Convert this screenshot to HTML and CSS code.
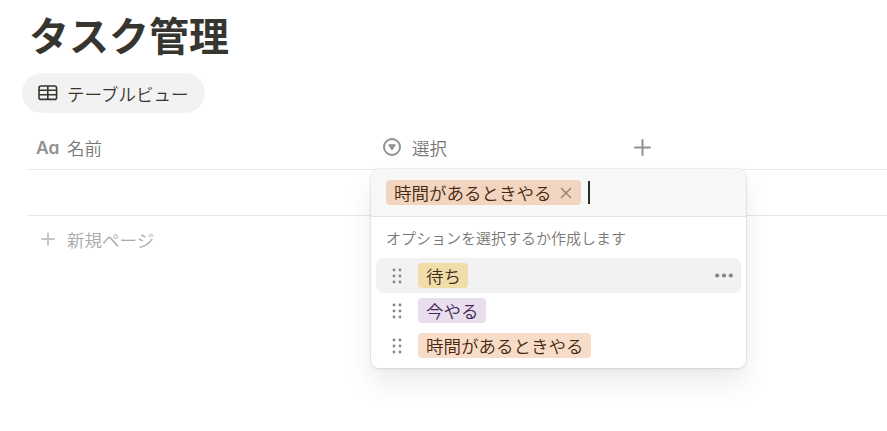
FILE: index.html
```html
<!DOCTYPE html>
<html lang="ja">
<head>
    <meta charset="UTF-8">
    <meta name="viewport" content="width=device-width, initial-scale=1.0">
    <title>タスク管理</title>
    <link rel="stylesheet" href="styles.css">
</head>
<body>

    <h1>タスク管理</h1>

    <button class="view-tab" type="button">
        <svg width="20" height="16" viewBox="0 0 20 16" fill="none" stroke="#37352f" stroke-width="1.6">
            <rect x="1" y="1" width="17.6" height="13.4" rx="2" />
            <path d="M1 5.2h17.6M1 9.8h17.6M9.8 1v13.4" />
        </svg>
        <span>テーブルビュー</span>
    </button>

    <div class="table">
        <div class="table-head">
            <div class="col-name">
                <span class="icon-title">Aa</span>
                <span>名前</span>
            </div>
            <div class="col-select">
                <svg width="18" height="18" viewBox="0 0 18 18">
                    <circle cx="9" cy="9" r="8" fill="none" stroke="#91918e" stroke-width="2" />
                    <path d="M5.7 6.2h6.6q.8 0 .4.7l-3.2 5.2q-.5.7-1 0l-3.2-5.2q-.4-.7.4-.7z" fill="#91918e" />
                </svg>
                <span>選択</span>
            </div>
            <div class="col-add">
                <svg width="17" height="17" viewBox="0 0 17 17" stroke="#91918e" stroke-width="2" stroke-linecap="round">
                    <path d="M8.5 1v15M1 8.5h15" />
                </svg>
            </div>
        </div>

        <div class="table-row">
            <div class="popup">
                <div class="popup-input">
                    <span class="tag tag-selected">時間があるときやる
                        <svg width="12" height="12" viewBox="0 0 12 12" stroke="#968777" stroke-width="1.5">
                            <path d="M1 1l10 10M11 1L1 11" />
                        </svg>
                    </span>
                    <span class="caret"></span>
                </div>
                <p class="hint">オプションを選択するか作成します</p>
                <ul class="options">
                    <li class="option active">
                        <svg class="handle" width="10" height="16" viewBox="0 0 10 16" fill="#868683">
                            <circle cx="2" cy="2" r="1.4" /><circle cx="8" cy="2" r="1.4" />
                            <circle cx="2" cy="8" r="1.4" /><circle cx="8" cy="8" r="1.4" />
                            <circle cx="2" cy="14" r="1.4" /><circle cx="8" cy="14" r="1.4" />
                        </svg>
                        <span class="tag yellow">待ち</span>
                        <svg class="more" width="18" height="5" viewBox="0 0 18 5" fill="#868683">
                            <circle cx="2.2" cy="2.5" r="2.1" /><circle cx="9" cy="2.5" r="2.1" /><circle cx="15.8" cy="2.5" r="2.1" />
                        </svg>
                    </li>
                    <li class="option">
                        <svg class="handle" width="10" height="16" viewBox="0 0 10 16" fill="#868683">
                            <circle cx="2" cy="2" r="1.4" /><circle cx="8" cy="2" r="1.4" />
                            <circle cx="2" cy="8" r="1.4" /><circle cx="8" cy="8" r="1.4" />
                            <circle cx="2" cy="14" r="1.4" /><circle cx="8" cy="14" r="1.4" />
                        </svg>
                        <span class="tag purple">今やる</span>
                    </li>
                    <li class="option">
                        <svg class="handle" width="10" height="16" viewBox="0 0 10 16" fill="#868683">
                            <circle cx="2" cy="2" r="1.4" /><circle cx="8" cy="2" r="1.4" />
                            <circle cx="2" cy="8" r="1.4" /><circle cx="8" cy="8" r="1.4" />
                            <circle cx="2" cy="14" r="1.4" /><circle cx="8" cy="14" r="1.4" />
                        </svg>
                        <span class="tag orange">時間があるときやる</span>
                    </li>
                </ul>
            </div>
        </div>

        <div class="new-page">
            <svg width="14" height="14" viewBox="0 0 14 14" stroke="#c4c4c1" stroke-width="1.8">
                <path d="M7 .5v13M.5 7h13" />
            </svg>
            <span>新規ページ</span>
        </div>
    </div>

</body>
</html>
```
FILE: styles.css
```css
body {
    margin: 0;
    height: 431px;
    overflow: hidden;
    background-color: #fff;
    color: #37352f;
    font-family: "Noto Sans CJK JP", sans-serif;
    font-size: 17.5px;
    font-weight: 350;
}

svg {
    display: block;
    flex-shrink: 0;
}

h1 {
    margin: 0;
    padding: 4px 0 0 29px;
    height: 66px;
    box-sizing: border-box;
    font-size: 40px;
    font-weight: 700;
    line-height: 60px;
}

.view-tab {
    display: flex;
    align-items: center;
    gap: 9px;
    width: 183px;
    height: 40px;
    margin: 7px 0 0 22px;
    padding: 0 0 0 16px;
    border: none;
    border-radius: 20px;
    background-color: #f2f2f2;
    color: #37352f;
    font: inherit;
    white-space: nowrap;
}

.view-tab svg {
    margin-top: -1px;
}

.table {
    margin-left: 27px;
}

.table-head {
    display: grid;
    grid-template-columns: 344px 250px 1fr;
    height: 56px;
    border-bottom: 1px solid #e9e9e7;
    color: #787774;
}

.table-head > div {
    display: flex;
    align-items: center;
    padding-top: 12px;
}

.icon-title {
    width: 31px;
    color: #91918e;
    font-family: Inter, sans-serif;
    font-feature-settings: "cv11";
    font-size: 17.5px;
    font-weight: 600;
}

.table-head .col-name {
    padding-left: 9px;
}

.table-head .col-select {
    gap: 11px;
    padding-left: 12px;
}

.table-head .col-add {
    padding-left: 13px;
}

.table-row {
    position: relative;
    height: 45px;
    border-bottom: 1px solid #e9e9e7;
}

/* Select menu, opens over the cell */
.popup {
    position: absolute;
    top: -1px;
    left: 344px;
    width: 375px;
    height: 199px;
    border-radius: 8px;
    background-color: #fff;
    box-shadow: 0 0 0 1px rgba(15, 15, 15, 0.06), 0 2px 4px rgba(15, 15, 15, 0.05), 0 16px 28px rgba(15, 15, 15, 0.08);
}

.popup-input {
    display: flex;
    align-items: center;
    gap: 7px;
    height: 47px;
    padding-left: 15px;
    border-bottom: 1px solid #e4e4e1;
    border-radius: 8px 8px 0 0;
    background-color: #f7f7f5;
}

.tag {
    display: flex;
    align-items: center;
    height: 25px;
    padding: 0 7px 0 8px;
    border-radius: 4px;
    line-height: 25px;
    white-space: nowrap;
}

.tag-selected {
    gap: 8px;
    padding-right: 9px;
    background-color: #f1d5c0;
    color: #49290e;
}

.caret {
    width: 2px;
    height: 23px;
    background-color: #2b2b2b;
}

.hint {
    margin: 0;
    padding: 9px 15px 0;
    height: 32px;
    color: #787774;
    font-size: 15px;
    line-height: 24px;
}

.options {
    margin: 0 5px;
    padding: 0;
    list-style: none;
}

.option {
    display: flex;
    align-items: center;
    height: 35px;
    padding: 0 8px 0 16px;
    border-radius: 7px;
}

.option.active {
    background-color: #f2f2f2;
}

.handle {
    margin-right: 16px;
}

.more {
    margin-left: auto;
}

.yellow {
    background-color: #f0dda9;
    color: #402c1b;
}

.purple {
    background-color: #e8deee;
    color: #412454;
}

.orange {
    background-color: #f7dcca;
    color: #49290e;
}

.new-page {
    display: flex;
    align-items: center;
    gap: 12px;
    height: 46px;
    padding-left: 14px;
    color: #aaa9a6;
}
```
